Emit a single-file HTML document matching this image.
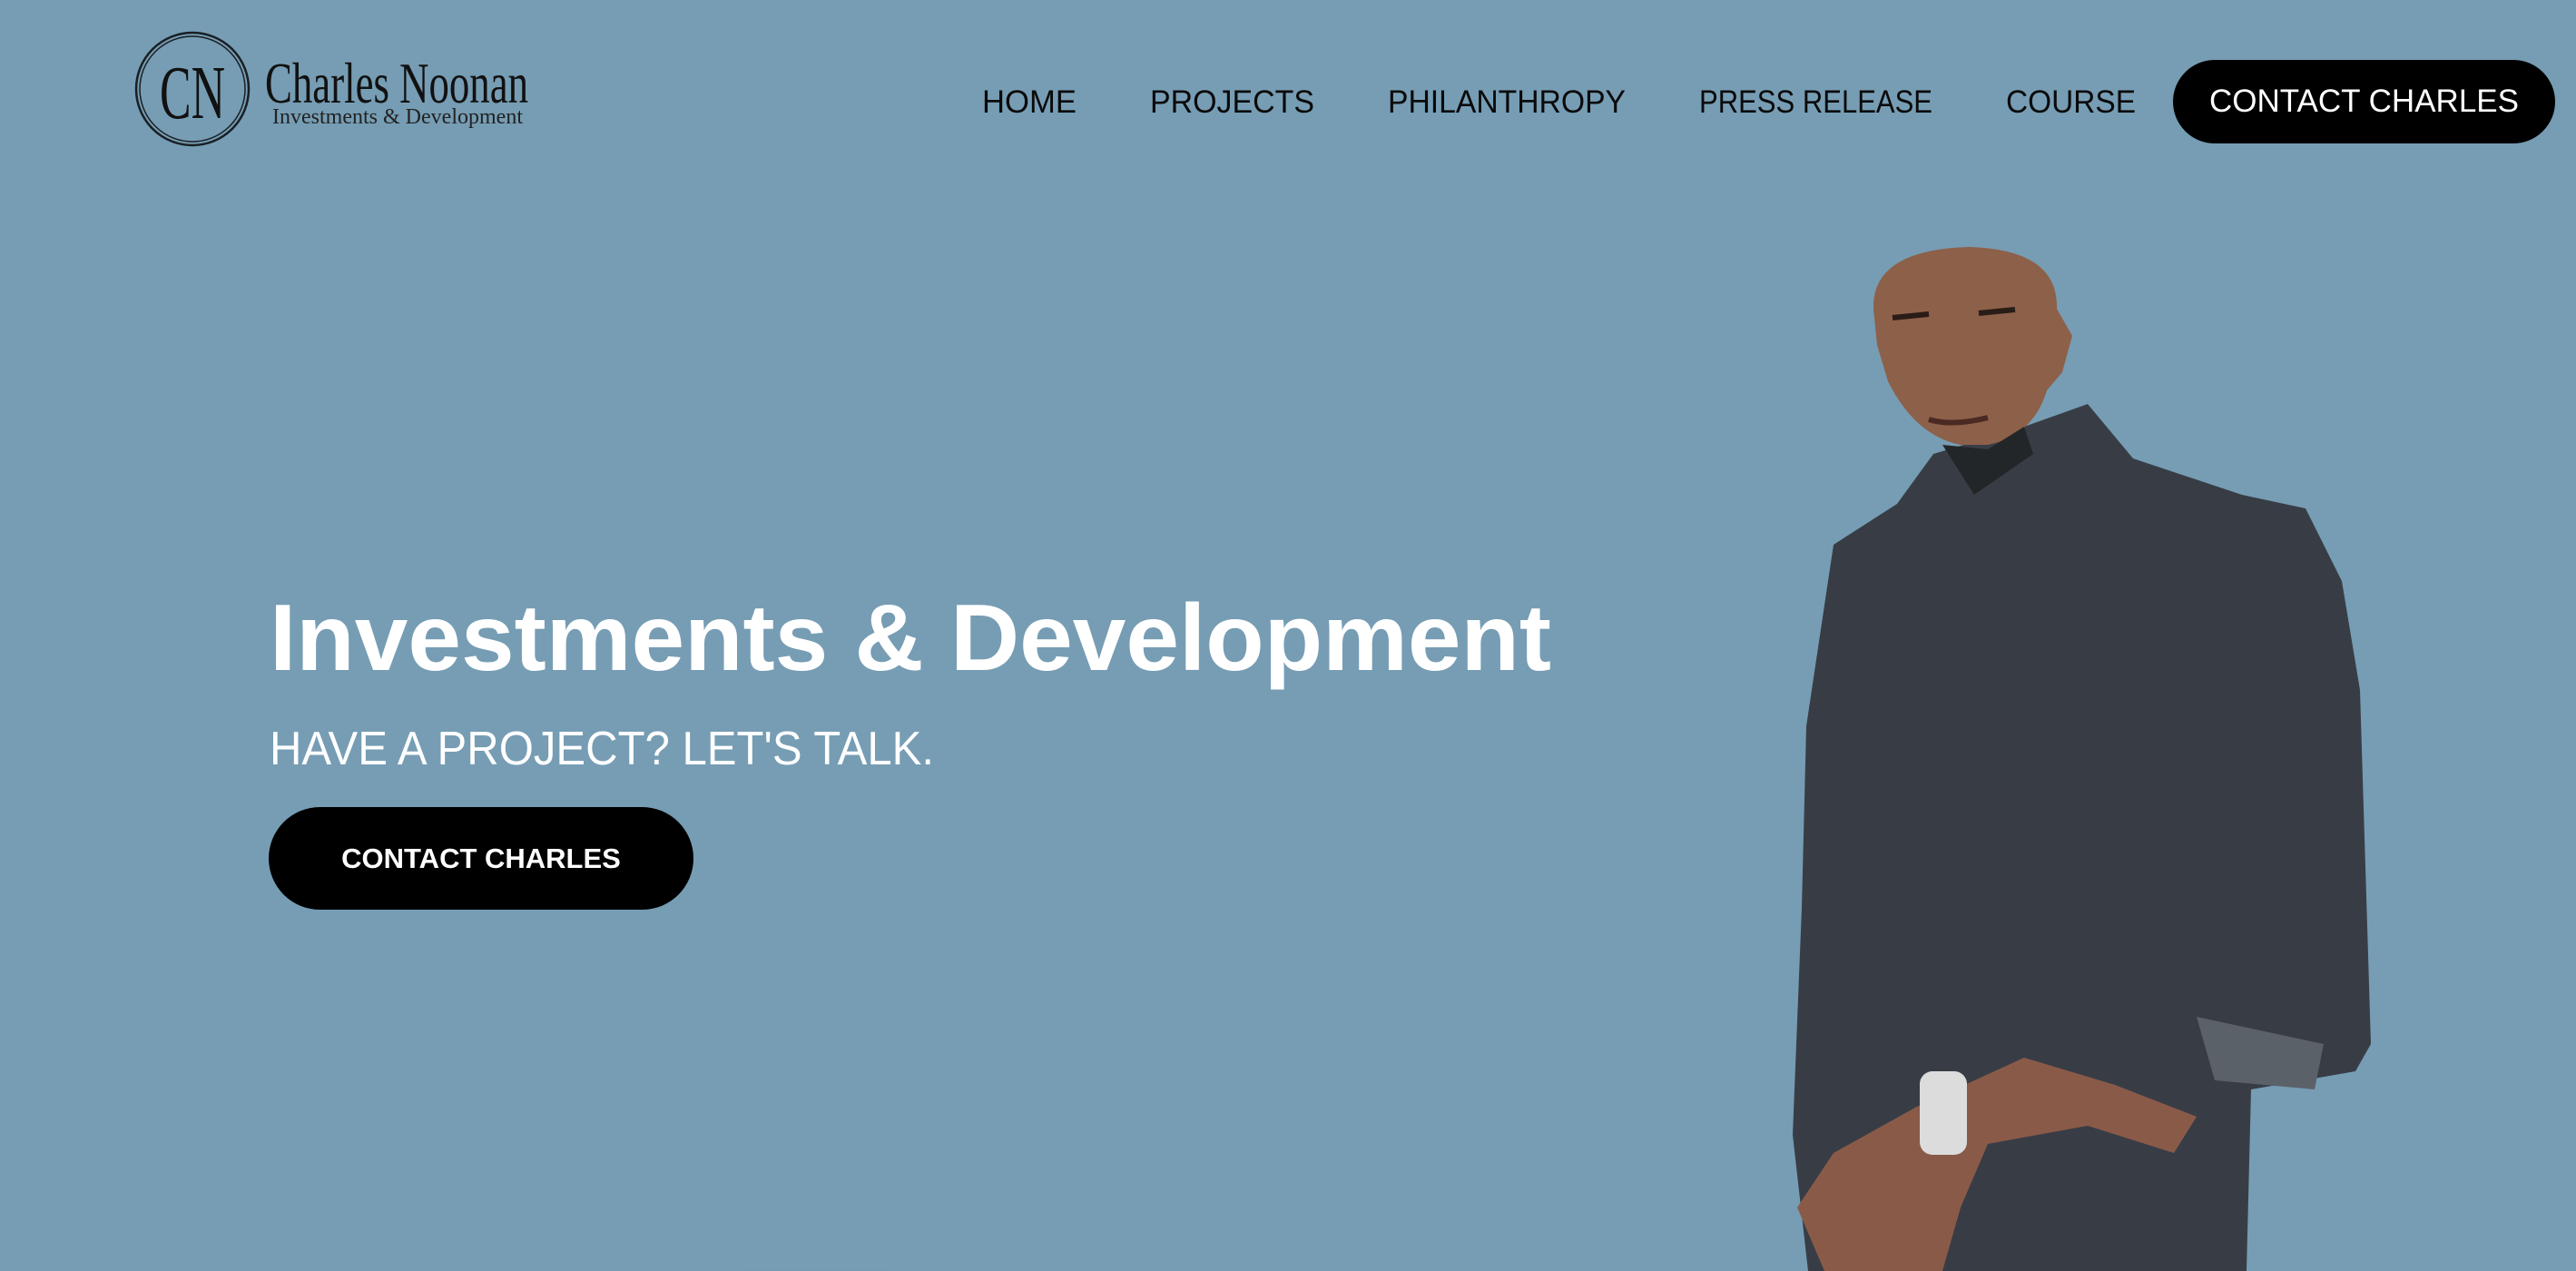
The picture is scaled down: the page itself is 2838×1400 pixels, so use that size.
<!DOCTYPE html>
<html><head><meta charset="utf-8"><style>
html,body{margin:0;padding:0}
body{width:2838px;height:1400px;background:#769db4;position:relative;overflow:hidden;font-family:"Liberation Sans",sans-serif}
.btn{position:absolute;background:#000;color:#fff;border-radius:60px;text-align:center;font-weight:bold}
</style></head><body>
<svg style="position:absolute;left:0;top:0" width="2838" height="1400">
  <defs>
    <radialGradient id="sh" cx="0.5" cy="1" r="0.6"><stop offset="0" stop-color="#5f859c" stop-opacity="0.8"/><stop offset="1" stop-color="#769db4" stop-opacity="0"/></radialGradient>
  </defs>
  <ellipse cx="900" cy="1400" rx="650" ry="60" fill="url(#sh)"/>
  <circle cx="212" cy="98" r="62" fill="none" stroke="#1a1f24" stroke-width="2.5"/>
  <circle cx="212" cy="98" r="58" fill="none" stroke="#1a1f24" stroke-width="1.5"/>
  <text x="212" y="130" font-family="Liberation Serif" font-size="84" text-anchor="middle" textLength="72" lengthAdjust="spacingAndGlyphs" fill="#111">CN</text>
  <text x="292" y="113" font-family="Liberation Serif" font-size="64" textLength="290" lengthAdjust="spacingAndGlyphs" fill="#111">Charles Noonan</text>
  <text x="300" y="136" font-family="Liberation Serif" font-size="24" textLength="276" lengthAdjust="spacingAndGlyphs" fill="#222">Investments &amp; Development</text>
  <g font-family="Liberation Sans" font-size="35" fill="#0a0a0a">
    <text x="1082" y="124" textLength="104" lengthAdjust="spacingAndGlyphs">HOME</text>
    <text x="1267" y="124" textLength="181" lengthAdjust="spacingAndGlyphs">PROJECTS</text>
    <text x="1529" y="124" textLength="262" lengthAdjust="spacingAndGlyphs">PHILANTHROPY</text>
    <text x="1872" y="124" textLength="257" lengthAdjust="spacingAndGlyphs">PRESS RELEASE</text>
    <text x="2210" y="124" textLength="143" lengthAdjust="spacingAndGlyphs">COURSE</text>
  </g>
  <text x="297" y="738" font-family="Liberation Sans" font-weight="bold" font-size="104" fill="#fff" textLength="1412" lengthAdjust="spacingAndGlyphs">Investments &amp; Development</text>
  <text x="297" y="842" font-family="Liberation Sans" font-size="52" fill="#fff" textLength="732" lengthAdjust="spacingAndGlyphs">HAVE A PROJECT? LET'S TALK.</text>
  <!-- person -->
  <path d="M2020 600 L2090 555 L2130 500 L2230 470 L2300 445 L2350 505 L2470 545 L2540 560 L2580 640 L2600 760 L2612 1150 L2595 1180 L2480 1200 L2475 1400 L1992 1400 L1975 1250 L1985 1000 L1990 800 Z" fill="#383d45"/>
  <path d="M2420 1120 L2560 1150 L2550 1200 L2440 1190 Z" fill="#5b6169"/>
  <path d="M2110 1220 L2230 1165 L2330 1195 L2420 1230 L2395 1270 L2300 1240 L2190 1260 L2160 1330 L2140 1400 L2010 1400 L1980 1330 L2020 1270 Z" fill="#8a5a49"/>
  <rect x="2115" y="1180" width="52" height="92" rx="14" fill="#dcdcdc"/>
  <path d="M2064 340 Q2062 275 2170 272 Q2268 275 2266 340 L2283 370 L2272 410 L2255 430 Q2240 480 2190 490 L2160 490 Q2110 480 2080 420 L2068 380 Z" fill="#8d6049"/>
  <path d="M2085 350 L2125 346 M2180 345 L2220 341" stroke="#2a1c16" stroke-width="6"/>
  <path d="M2125 462 Q2150 470 2190 460" stroke="#4a2a22" stroke-width="6" fill="none"/>
  <path d="M2140 490 L2190 495 L2230 470 L2240 500 L2175 545 Z" fill="#232629"/>
</svg>
<div class="btn" style="left:2394px;top:66px;width:421px;height:92px;line-height:92px;font-size:35px;font-weight:normal">CONTACT CHARLES</div>
<div class="btn" style="left:296px;top:889px;width:468px;height:113px;line-height:113px;font-size:31px">CONTACT CHARLES</div>
</body></html>
